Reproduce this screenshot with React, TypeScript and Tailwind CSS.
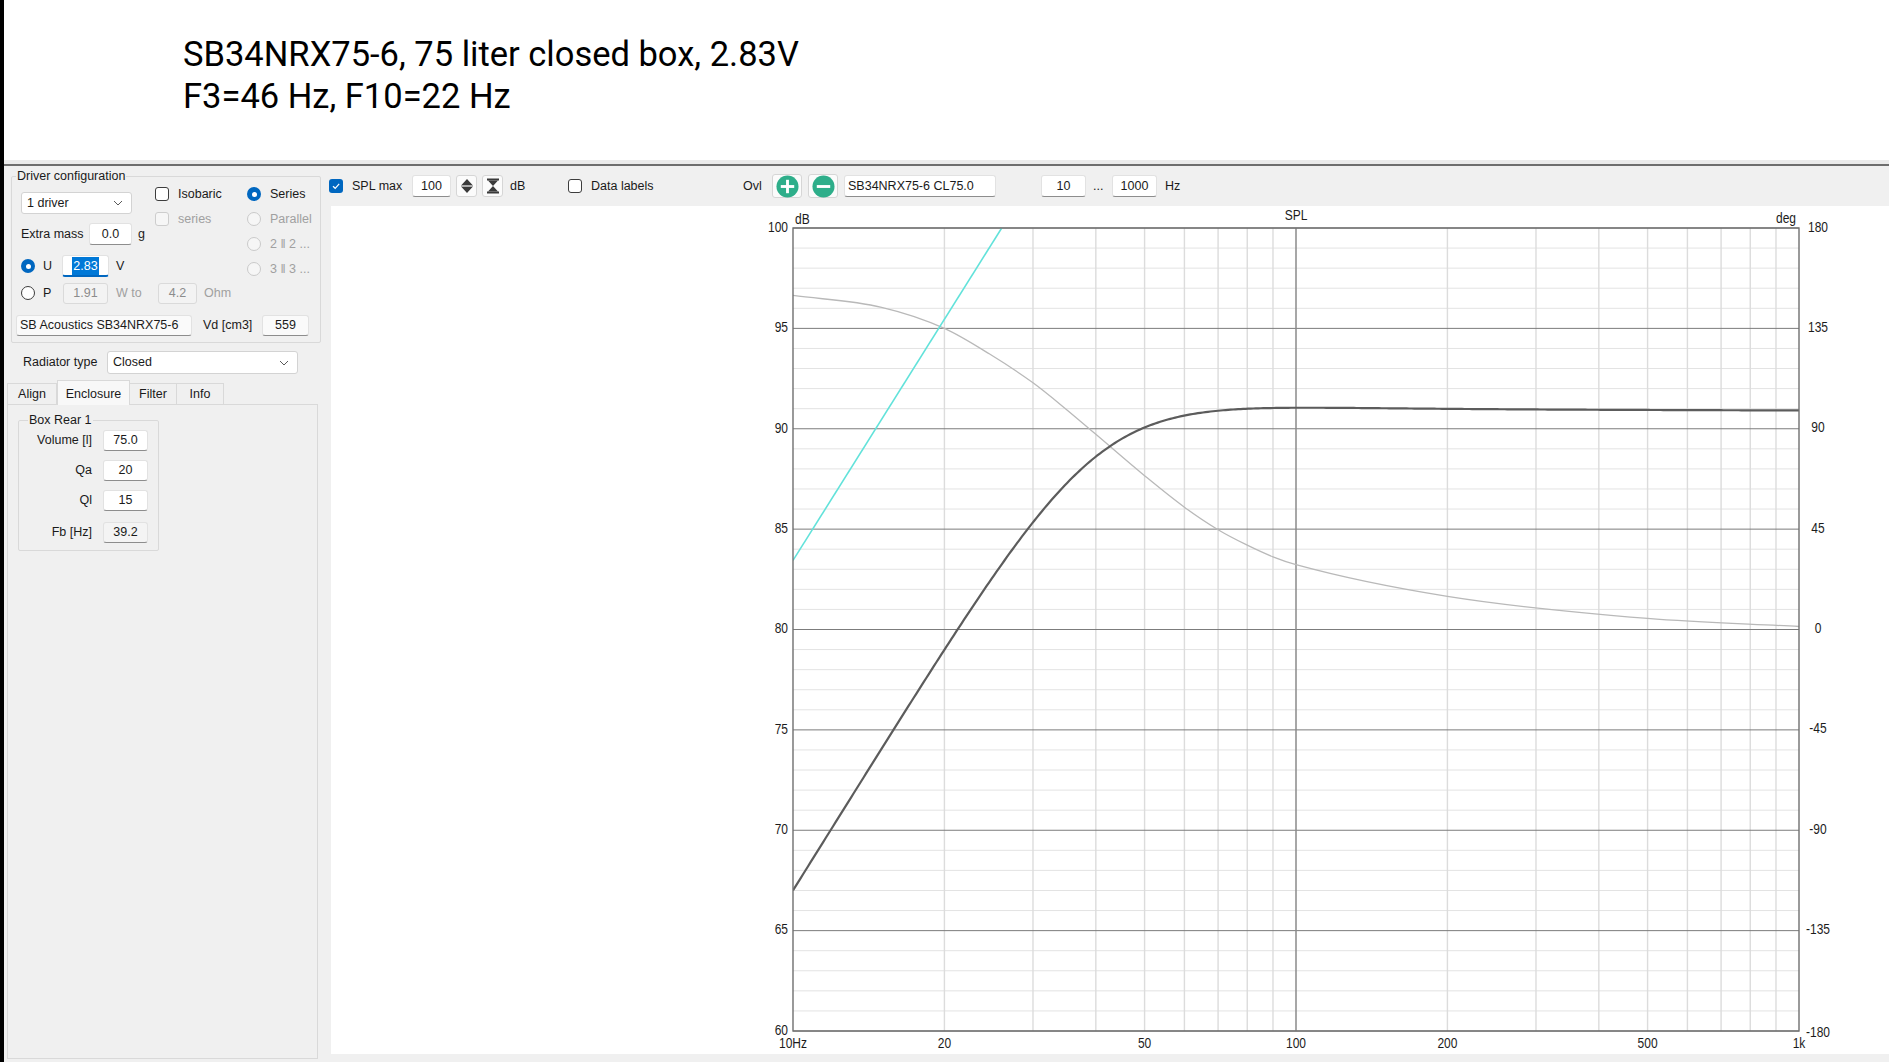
import React from "react"
import clsx from "clsx"

const UI = "font-['Liberation_Sans',Arial,sans-serif] text-[12.5px] text-[#1a1a1a]"

// chart geometry, relative to the white chart panel
const L = 462
const T = 22
const PW = 1006
const PH = 803
const xOf = (f: number) => L + (Math.log10(f) - 1) * (PW / 2)
const yOf = (db: number) => T + (100 - db) * (PH / 40)

// closed box: 2nd order high pass, fc 40 Hz, Qtc 0.76
function splAt(f: number) {
    const x2 = (f / 40) ** 2
    const q = 0.76
    const h = (x2 * x2) / ((1 - x2) ** 2 + x2 / (q * q))
    return 91.03 + 10 * Math.log10(h) - 0.06 * Math.log10(f / 10)
}

function splPath() {
    let d = ""
    for (let i = 0; i <= 400; i++) {
        const f = 10 ** (1 + (2 * i) / 400)
        d += `${i === 0 ? "M" : " L"}${xOf(f).toFixed(2)} ${yOf(splAt(f)).toFixed(2)}`
    }
    return d
}

const phaseData: [number, number][] = [
    [10, 96.64], [15, 96.05], [20, 95.0], [24.6, 93.72], [30, 92.29], [35, 90.95],
    [40, 89.72], [50, 87.66], [60, 86.09], [70, 84.97], [80, 84.2], [90, 83.62],
    [100, 83.23], [200, 81.65], [500, 80.55], [1000, 80.15],
]

// monotone cubic through the points, in (log f, dB) space
function curve(pts: [number, number][]) {
    const xs = pts.map(p => Math.log10(p[0]))
    const ys = pts.map(p => p[1])
    const n = xs.length
    const d: number[] = []
    for (let i = 0; i < n - 1; i++) d.push((ys[i + 1] - ys[i]) / (xs[i + 1] - xs[i]))
    const m: number[] = new Array(n).fill(0)
    m[0] = d[0]
    m[n - 1] = d[n - 2]
    for (let i = 1; i < n - 1; i++) m[i] = d[i - 1] * d[i] <= 0 ? 0 : (d[i - 1] + d[i]) / 2
    for (let i = 0; i < n - 1; i++) {
        if (d[i] === 0) { m[i] = 0; m[i + 1] = 0; continue }
        const a = m[i] / d[i]
        const b = m[i + 1] / d[i]
        const s = a * a + b * b
        if (s > 9) {
            const t = 3 / Math.sqrt(s)
            m[i] = t * a * d[i]
            m[i + 1] = t * b * d[i]
        }
    }
    const px = (lx: number) => L + (lx - 1) * (PW / 2)
    let path = `M${px(xs[0]).toFixed(2)} ${yOf(ys[0]).toFixed(2)}`
    for (let i = 0; i < n - 1; i++) {
        const h = xs[i + 1] - xs[i]
        const c1x = px(xs[i] + h / 3), c1y = yOf(ys[i] + (m[i] * h) / 3)
        const c2x = px(xs[i + 1] - h / 3), c2y = yOf(ys[i + 1] - (m[i + 1] * h) / 3)
        path += ` C${c1x.toFixed(2)} ${c1y.toFixed(2)} ${c2x.toFixed(2)} ${c2y.toFixed(2)} ${px(xs[i + 1]).toFixed(2)} ${yOf(ys[i + 1]).toFixed(2)}`
    }
    return path
}

function Lbl({ x, y, anchor = "start", children }: { x: number; y: number; anchor?: "start" | "middle" | "end"; children: React.ReactNode }) {
    return (
        <text transform={`translate(${x} ${y}) scale(0.8 1)`} textAnchor={anchor} fontSize={15} fill="#1c1c1c">
            {children}
        </text>
    )
}

function Chart() {
    const dbs = Array.from({ length: 41 }, (_, i) => 60 + i)
    const minorF = [20, 30, 40, 50, 60, 70, 80, 90, 200, 300, 400, 500, 600, 700, 800, 900]
    const ticks: [number, string][] = [[10, "10Hz"], [20, "20"], [50, "50"], [100, "100"], [200, "200"], [500, "500"], [1000, "1k"]]

    return (
        <svg width="1558" height="848" className="block font-['Liberation_Sans',Arial,sans-serif]">
            <defs>
                <clipPath id="plot">
                    <rect x={L} y={T} width={PW} height={PH} />
                </clipPath>
            </defs>

            {dbs.filter(d => d % 5 !== 0).map(d => (
                <line key={d} x1={L} x2={L + PW} y1={yOf(d)} y2={yOf(d)} stroke="#e3e3e3" strokeWidth={1} />
            ))}
            {minorF.map(f => (
                <line key={f} x1={xOf(f)} x2={xOf(f)} y1={T} y2={T + PH} stroke="#dcdcdc" strokeWidth={1.4} />
            ))}
            {dbs.filter(d => d % 5 === 0).map(d => (
                <line key={d} x1={L} x2={L + PW} y1={yOf(d)} y2={yOf(d)} stroke="#7c7c7c" strokeWidth={1} />
            ))}
            <line x1={xOf(100)} x2={xOf(100)} y1={T} y2={T + PH} stroke="#8a8a8a" strokeWidth={1.5} />

            <g clipPath="url(#plot)" fill="none">
                <path d={curve(phaseData)} stroke="#b9b9b9" strokeWidth={1.3} />
                <path d={`M${xOf(10)} ${yOf(83.44)} L${xOf(26.0)} ${yOf(100)}`} stroke="#62e2da" strokeWidth={1.6} />
                <path d={splPath()} stroke="#5c5c5c" strokeWidth={2.2} strokeLinejoin="round" />
            </g>

            <rect x={L} y={T} width={PW} height={PH} fill="none" stroke="#6f6f6f" strokeWidth={1.4} />

            {dbs.filter(d => d % 5 === 0).map(d => (
                <Lbl key={d} x={457} y={yOf(d) + 3.8} anchor="end">{d}</Lbl>
            ))}
            {dbs.filter(d => d % 5 === 0).map(d => (
                <Lbl key={d} x={1487} y={yOf(d) + (d === 60 ? 6 : 3.5)} anchor="middle">{(d - 80) * 9}</Lbl>
            ))}
            {ticks.map(([f, s]) => (
                <Lbl key={s} x={xOf(f)} y={842} anchor="middle">{s}</Lbl>
            ))}
            <Lbl x={464} y={18}>dB</Lbl>
            <Lbl x={965} y={14} anchor="middle">SPL</Lbl>
            <Lbl x={1465} y={17} anchor="end">deg</Lbl>
        </svg>
    )
}

function Check({ checked = false, disabled = false }: { checked?: boolean; disabled?: boolean }) {
    if (checked) {
        return (
            <span className="flex h-[14px] w-[14px] shrink-0 items-center justify-center rounded-[3px] bg-[#0067c0]">
                <svg width="10" height="10" viewBox="0 0 10 10">
                    <path d="M2 5.2 L4.2 7.3 L8.2 2.8" fill="none" stroke="white" strokeWidth="1.2" />
                </svg>
            </span>
        )
    }
    return (
        <span className={clsx(
            "h-[14px] w-[14px] shrink-0 rounded-[3px] border",
            disabled ? "border-[#cdcdcd] bg-[#f6f6f6]" : "border-[#3d3d3d] bg-white"
        )} />
    )
}

function Radio({ checked = false, disabled = false }: { checked?: boolean; disabled?: boolean }) {
    if (checked) {
        return (
            <span className="flex h-[14px] w-[14px] shrink-0 items-center justify-center rounded-full bg-[#0067c0]">
                <span className="h-[5px] w-[5px] rounded-full bg-white" />
            </span>
        )
    }
    return (
        <span className={clsx(
            "h-[14px] w-[14px] shrink-0 rounded-full border",
            disabled ? "border-[#cacaca] bg-[#f6f6f6]" : "border-[#3d3d3d] bg-white"
        )} />
    )
}

function Field({ value, className, muted, left }: { value: React.ReactNode; className?: string; muted?: boolean; left?: boolean }) {
    return (
        <div className={clsx(
            "flex h-[22px] shrink-0 items-center rounded-[3px] border whitespace-nowrap",
            left ? "justify-start px-[3px]" : "justify-center",
            muted ? "border-[#dadada] bg-[#f3f3f3] text-[#8c8c8c]" : "border-[#e2e2e2] border-b-[#8d8d8d] bg-white",
            className
        )}>
            {value}
        </div>
    )
}

function Combo({ value, className }: { value: string; className?: string }) {
    return (
        <div className={clsx("flex h-[23px] shrink-0 items-center justify-between rounded-[3px] border border-[#d3d3d3] bg-white pl-[5px] pr-[8px]", className)}>
            <span>{value}</span>
            <svg width="10" height="6" viewBox="0 0 10 6">
                <path d="M1 1 L5 5 L9 1" fill="none" stroke="#5a5a5a" strokeWidth="1" />
            </svg>
        </div>
    )
}

function IconBtn({ children, className }: { children: React.ReactNode; className?: string }) {
    return (
        <div className={clsx("flex h-[22px] w-[21px] shrink-0 items-center justify-center rounded-[3px] border border-[#d6d6d6] bg-[#fbfbfb]", className)}>
            {children}
        </div>
    )
}

function CircleBtn({ minus, className }: { minus?: boolean; className?: string }) {
    return (
        <div className={clsx("flex h-[24px] w-[30px] shrink-0 items-center justify-center rounded-[3px] border border-[#d6d6d6] bg-[#fbfbfb]", className)}>
            <svg width="23" height="23" viewBox="0 0 24 24">
                <circle cx="12" cy="12" r="11.5" fill="#2eae8a" />
                <rect x="5" y="10.5" width="14" height="3" fill="white" />
                {!minus && <rect x="10.5" y="5" width="3" height="14" fill="white" />}
            </svg>
        </div>
    )
}

function LeftPanel() {
    return (
        <div className="flex w-[317px] shrink-0 flex-col">
            <fieldset className="ml-[7px] mt-[3px] w-[310px] rounded-[2px] border border-[#d9d9d9] pb-[6px]">
                <legend className="ml-[4px] px-[1px] leading-[14px]">Driver configuration</legend>
                <div className="flex items-start">
                    <div className="ml-[9px] flex w-[134px] shrink-0 flex-col">
                        <Combo value="1 driver" className="mt-[9px] w-[111px] !h-[22px]" />
                        <div className="mt-[9px] flex h-[22px] w-max items-center whitespace-nowrap">
                            <span className="w-[68px] shrink-0">Extra mass</span>
                            <Field value="0.0" className="w-[43px]" />
                            <span className="ml-[6px]">g</span>
                        </div>
                        <div className="mt-[10px] flex h-[22px] w-max items-center whitespace-nowrap">
                            <Radio checked />
                            <span className="ml-[8px] w-[19px] shrink-0">U</span>
                            <div className="flex h-[22px] w-[47px] shrink-0 items-center justify-center rounded-[3px] border border-[#e2e2e2] border-b-2 border-b-[#0067c0] bg-white">
                                <span className="bg-[#0078d7] px-[1px] leading-[18px] text-white">2.83</span>
                            </div>
                            <span className="ml-[7px]">V</span>
                        </div>
                        <div className="mt-[5px] flex h-[22px] w-max items-center whitespace-nowrap">
                            <Radio />
                            <span className="ml-[8px] w-[20px] shrink-0">P</span>
                            <Field value="1.91" muted className="w-[45px] !h-[21px]" />
                            <span className="ml-[8px] w-[42px] shrink-0 text-[#a0a0a0]">W to</span>
                            <Field value="4.2" muted className="w-[39px] !h-[21px]" />
                            <span className="ml-[7px] text-[#a0a0a0]">Ohm</span>
                        </div>
                    </div>
                    <div className="mt-[1px] flex w-[92px] shrink-0 flex-col gap-[5px]">
                        <div className="flex h-[20px] items-center">
                            <Check />
                            <span className="ml-[9px]">Isobaric</span>
                        </div>
                        <div className="flex h-[20px] items-center">
                            <Check disabled />
                            <span className="ml-[9px] text-[#a0a0a0]">series</span>
                        </div>
                    </div>
                    <div className="mt-[1px] flex flex-col gap-[5px] whitespace-nowrap">
                        <div className="flex h-[20px] items-center">
                            <Radio checked />
                            <span className="ml-[9px]">Series</span>
                        </div>
                        <div className="flex h-[20px] items-center">
                            <Radio disabled />
                            <span className="ml-[9px] text-[#a0a0a0]">Parallel</span>
                        </div>
                        <div className="flex h-[20px] items-center">
                            <Radio disabled />
                            <span className="ml-[9px] text-[#a0a0a0]">2 ‖ 2 ...</span>
                        </div>
                        <div className="flex h-[20px] items-center">
                            <Radio disabled />
                            <span className="ml-[9px] text-[#a0a0a0]">3 ‖ 3 ...</span>
                        </div>
                    </div>
                </div>
                <div className="ml-[4px] mt-[11px] flex items-center whitespace-nowrap">
                    <Field value="SB Acoustics SB34NRX75-6" left className="w-[176px] !h-[21px] !bg-[#fafafa]" />
                    <span className="ml-[11px] w-[59px] shrink-0">Vd [cm3]</span>
                    <Field value="559" className="w-[47px] !h-[21px] !bg-[#fafafa]" />
                </div>
            </fieldset>

            <div className="mt-[8px] flex h-[23px] items-center">
                <span className="ml-[19px] w-[84px] shrink-0">Radiator type</span>
                <Combo value="Closed" className="w-[191px]" />
            </div>

            <div className="ml-[3px] mt-[6px] flex h-[24px] items-end">
                <div className="flex h-[21px] w-[50px] items-center justify-center border border-b-0 border-[#d9d9d9]">Align</div>
                <div className="relative z-10 -mb-[1px] flex h-[25px] w-[73px] items-start justify-center border border-b-0 border-[#d9d9d9] bg-[#f8f8f8] pt-[4px]">Enclosure</div>
                <div className="flex h-[21px] w-[47px] items-center justify-center border border-b-0 border-l-0 border-[#d9d9d9]">Filter</div>
                <div className="flex h-[21px] w-[47px] items-center justify-center border border-b-0 border-l-0 border-[#d9d9d9]">Info</div>
            </div>
            <div className="ml-[3px] h-[655px] w-[311px] border border-[#d9d9d9]">
                <fieldset className="ml-[10px] mt-[8px] w-[141px] rounded-[2px] border border-[#d9d9d9] pb-[7px]">
                    <legend className="ml-[9px] px-[1px] leading-[14px]">Box Rear 1</legend>
                    <div className="mt-[3px] flex items-center">
                        <span className="w-[73px] shrink-0 text-right">Volume [l]</span>
                        <Field value="75.0" className="ml-[11px] w-[45px] !h-[21px]" />
                    </div>
                    <div className="mt-[9px] flex items-center">
                        <span className="w-[73px] shrink-0 text-right">Qa</span>
                        <Field value="20" className="ml-[11px] w-[45px] !h-[21px]" />
                    </div>
                    <div className="mt-[9px] flex items-center">
                        <span className="w-[73px] shrink-0 text-right">Ql</span>
                        <Field value="15" className="ml-[11px] w-[45px] !h-[21px]" />
                    </div>
                    <div className="mt-[11px] flex items-center">
                        <span className="w-[73px] shrink-0 text-right">Fb [Hz]</span>
                        <Field value="39.2" className="ml-[11px] w-[45px] !h-[21px] !bg-[#f4f4f4]" />
                    </div>
                </fieldset>
            </div>
        </div>
    )
}

function Toolbar() {
    return (
        <div className="flex h-[40px] shrink-0 items-center whitespace-nowrap">
            <span className="ml-[8px]"><Check checked /></span>
            <span className="ml-[9px] w-[60px] shrink-0">SPL max</span>
            <Field value="100" className="w-[39px]" />
            <IconBtn className="ml-[5px]">
                <svg width="14" height="16" viewBox="0 0 14 16">
                    <path d="M1.5 7 L7 1 L12.5 7 Z M1.5 9 L12.5 9 L7 15 Z" fill="#3a3a3a" />
                    <rect x="1" y="7.6" width="12" height="0.8" fill="#3a3a3a" />
                </svg>
            </IconBtn>
            <IconBtn className="ml-[5px]">
                <svg width="14" height="16" viewBox="0 0 14 16">
                    <rect x="1" y="0.5" width="12" height="2" fill="#3a3a3a" />
                    <rect x="1" y="13.5" width="12" height="2" fill="#3a3a3a" />
                    <path d="M2 2.5 L12 2.5 L7 8 Z M2 13.5 L12 13.5 L7 8 Z" fill="#3a3a3a" />
                </svg>
            </IconBtn>
            <span className="ml-[7px] w-[58px] shrink-0">dB</span>
            <Check />
            <span className="ml-[9px] w-[152px] shrink-0">Data labels</span>
            <span className="w-[29px] shrink-0">Ovl</span>
            <CircleBtn />
            <CircleBtn minus className="ml-[6px]" />
            <Field value="SB34NRX75-6 CL75.0" left className="ml-[6px] w-[152px]" />
            <Field value="10" className="ml-[45px] w-[45px]" />
            <span className="w-[26px] shrink-0 pl-[7px]">...</span>
            <Field value="1000" className="w-[45px]" />
            <span className="ml-[8px]">Hz</span>
        </div>
    )
}

export default function App() {
    return (
        <div className={clsx("flex h-[1062px] w-[1889px] overflow-hidden bg-white", UI)}>
            <div className="w-[4px] shrink-0 bg-black" />
            <div className="flex w-[1885px] flex-col">
                <div className="h-[160px] shrink-0 bg-white pl-[179px] pt-[33px] font-['Roboto',sans-serif] text-[34.5px] leading-[42px] text-black">
                    <div>SB34NRX75-6, 75 liter closed box, 2.83V</div>
                    <div>F3=46 Hz, F10=22 Hz</div>
                </div>
                <div className="h-[4px] shrink-0 bg-[#ebebeb]" />
                <div className="h-[2px] shrink-0 bg-[#6e6e6e]" />
                <div className="flex flex-1 bg-[#f0f0f0]">
                    <LeftPanel />
                    <div className="flex flex-1 flex-col">
                        <Toolbar />
                        <div className="ml-[10px] h-[848px] bg-white">
                            <Chart />
                        </div>
                    </div>
                </div>
            </div>
        </div>
    )
}
